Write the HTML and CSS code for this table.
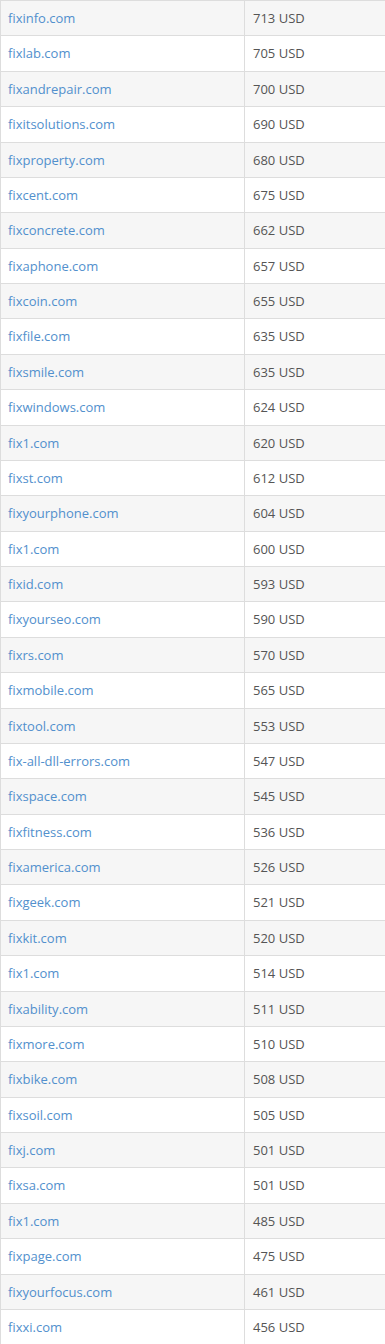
FILE: index.html
```html
<!DOCTYPE html>
<html lang="en">
<head>
<meta charset="utf-8">
<title>Domains</title>
<link rel="stylesheet" href="styles.css">
</head>
<body>
<table class="domains">
<tbody>
<tr><td class="name"><a href="#">fixinfo.com</a></td><td class="price">713 USD</td></tr>
<tr><td class="name"><a href="#">fixlab.com</a></td><td class="price">705 USD</td></tr>
<tr><td class="name"><a href="#">fixandrepair.com</a></td><td class="price">700 USD</td></tr>
<tr><td class="name"><a href="#">fixitsolutions.com</a></td><td class="price">690 USD</td></tr>
<tr><td class="name"><a href="#">fixproperty.com</a></td><td class="price">680 USD</td></tr>
<tr><td class="name"><a href="#">fixcent.com</a></td><td class="price">675 USD</td></tr>
<tr><td class="name"><a href="#">fixconcrete.com</a></td><td class="price">662 USD</td></tr>
<tr><td class="name"><a href="#">fixaphone.com</a></td><td class="price">657 USD</td></tr>
<tr><td class="name"><a href="#">fixcoin.com</a></td><td class="price">655 USD</td></tr>
<tr><td class="name"><a href="#">fixfile.com</a></td><td class="price">635 USD</td></tr>
<tr><td class="name"><a href="#">fixsmile.com</a></td><td class="price">635 USD</td></tr>
<tr><td class="name"><a href="#">fixwindows.com</a></td><td class="price">624 USD</td></tr>
<tr><td class="name"><a href="#">fix1.com</a></td><td class="price">620 USD</td></tr>
<tr><td class="name"><a href="#">fixst.com</a></td><td class="price">612 USD</td></tr>
<tr><td class="name"><a href="#">fixyourphone.com</a></td><td class="price">604 USD</td></tr>
<tr><td class="name"><a href="#">fix1.com</a></td><td class="price">600 USD</td></tr>
<tr><td class="name"><a href="#">fixid.com</a></td><td class="price">593 USD</td></tr>
<tr><td class="name"><a href="#">fixyourseo.com</a></td><td class="price">590 USD</td></tr>
<tr><td class="name"><a href="#">fixrs.com</a></td><td class="price">570 USD</td></tr>
<tr><td class="name"><a href="#">fixmobile.com</a></td><td class="price">565 USD</td></tr>
<tr><td class="name"><a href="#">fixtool.com</a></td><td class="price">553 USD</td></tr>
<tr><td class="name"><a href="#">fix-all-dll-errors.com</a></td><td class="price">547 USD</td></tr>
<tr><td class="name"><a href="#">fixspace.com</a></td><td class="price">545 USD</td></tr>
<tr><td class="name"><a href="#">fixfitness.com</a></td><td class="price">536 USD</td></tr>
<tr><td class="name"><a href="#">fixamerica.com</a></td><td class="price">526 USD</td></tr>
<tr><td class="name"><a href="#">fixgeek.com</a></td><td class="price">521 USD</td></tr>
<tr><td class="name"><a href="#">fixkit.com</a></td><td class="price">520 USD</td></tr>
<tr><td class="name"><a href="#">fix1.com</a></td><td class="price">514 USD</td></tr>
<tr><td class="name"><a href="#">fixability.com</a></td><td class="price">511 USD</td></tr>
<tr><td class="name"><a href="#">fixmore.com</a></td><td class="price">510 USD</td></tr>
<tr><td class="name"><a href="#">fixbike.com</a></td><td class="price">508 USD</td></tr>
<tr><td class="name"><a href="#">fixsoil.com</a></td><td class="price">505 USD</td></tr>
<tr><td class="name"><a href="#">fixj.com</a></td><td class="price">501 USD</td></tr>
<tr><td class="name"><a href="#">fixsa.com</a></td><td class="price">501 USD</td></tr>
<tr><td class="name"><a href="#">fix1.com</a></td><td class="price">485 USD</td></tr>
<tr><td class="name"><a href="#">fixpage.com</a></td><td class="price">475 USD</td></tr>
<tr><td class="name"><a href="#">fixyourfocus.com</a></td><td class="price">461 USD</td></tr>
<tr><td class="name"><a href="#">fixxi.com</a></td><td class="price">456 USD</td></tr>
</tbody>
</table>
</body>
</html>
```

FILE: styles.css
```css
html, body {
  margin: 0;
  padding: 0;
  background: #ffffff;
}

body {
  font-family: "Open Sans", "Liberation Sans", sans-serif;
  font-size: 13px;
  color: #555555;
}

.domains {
  width: 385px;
  border-collapse: collapse;
  border-spacing: 0;
  border-left: 1px solid #dddddd;
}

.domains tr:nth-child(odd) {
  background: #f6f6f6;
}

.domains td {
  padding: 8px 7px;
  line-height: 18.38px;
  border-top: 1px solid #dddddd;
  vertical-align: top;
  white-space: nowrap;
}

.domains .name {
  width: 229px;
  border-right: 1px solid #dddddd;
}

.domains .price {
  padding-left: 8px;
  color: #555555;
}

.domains a {
  color: #5290cd;
  text-decoration: none;
}
```
